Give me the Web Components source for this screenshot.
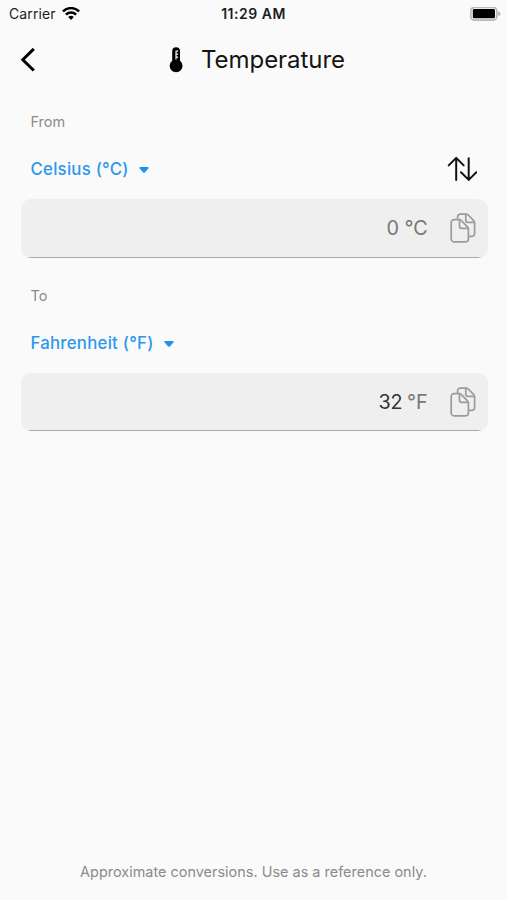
<!DOCTYPE html>
<html lang="en">
<head>
<meta charset="utf-8">
<title>Temperature</title>
<style>
  body {
    margin: 0;
    background: #fafafa;
  }
</style>
</head>
<body>
<unit-converter></unit-converter>

<script>
const define = (name, html) => {
  const template = document.createElement('template');
  template.innerHTML = html;
  window.customElements.define(name, class extends HTMLElement {
    constructor() {
      super();
      this.attachShadow({mode: 'open'})
          .appendChild(template.content.cloneNode(true));
    }
  });
};

define('status-bar', `
  <style>
    :host {
      display: grid;
      grid-template-columns: 1fr auto 1fr;
      align-items: center;
      height: 28px;
      padding: 0 6px 0 9px;
      box-sizing: border-box;
      font-size: 14px;
      color: #1c1c1c;
    }
    .carrier {
      display: flex;
      align-items: center;
      gap: 6px;
      letter-spacing: 0.1px;
    }
    .time {
      padding-right: 3px;
      font-weight: 600;
      letter-spacing: 0.5px;
    }
    .battery {
      justify-self: end;
    }
    svg {
      display: block;
    }
  </style>
  <div class="carrier">
    <span>Carrier</span>
    <svg width="18" height="14" viewBox="0 0 18 14" fill="none" stroke="#000" stroke-width="2.5">
      <path d="M.9 4.4a11.6 11.6 0 0 1 16.2 0"/>
      <path d="M3.9 7.7a7.3 7.3 0 0 1 10.2 0"/>
      <path d="M9 13 6.2 10.1a4.1 4.1 0 0 1 5.6 0z" fill="#000" stroke="none"/>
    </svg>
  </div>
  <div class="time">11:29 AM</div>
  <svg class="battery" width="31" height="15" viewBox="0 0 31 15">
    <rect x=".8" y=".3" width="26" height="12.8" rx="3.6" fill="#fafafa" stroke="#b8b8b8" stroke-width="1.7"/>
    <rect x="2.8" y="2.1" width="22.2" height="9.2" rx="1.4"/>
    <path d="M28.2 4.2c2.8.9 2.8 4.1 0 5z" fill="#b0b0b0"/>
  </svg>
`);

define('nav-header', `
  <style>
    :host {
      display: grid;
      grid-template-columns: 1fr auto 1fr;
      align-items: center;
      height: 64px;
      padding: 0 20px;
      box-sizing: border-box;
      color: #151515;
    }
    .title {
      display: flex;
      align-items: center;
      gap: 18px;
      padding-left: 7px;
      font-size: 24px;
      letter-spacing: -0.05px;
    }
    svg {
      display: block;
    }
  </style>
  <svg width="16" height="24" viewBox="0 0 16 24" fill="none" stroke="#000" stroke-width="3">
    <path d="M13.8.9 2.8 11.7l11 10.8"/>
  </svg>
  <div class="title">
    <svg width="14" height="26" viewBox="0 0 14 26">
      <path d="M3.2 4.1a3.9 3.9 0 0 1 7.8 0v9.7a6.4 6.4 0 1 1-7.8 0z"/>
      <path d="M7 3.8v8.6M7 4.2h2.2M7 7.2h2.2M7 10.2h2.2" stroke="#fafafa" stroke-width="1.2" fill="none"/>
    </svg>
    <slot></slot>
  </div>
`);

define('swap-icon', `
  <style>
    :host, svg {
      display: block;
    }
  </style>
  <svg width="30" height="26" viewBox="0 0 30 26" fill="none" stroke="#111" stroke-width="2" stroke-linecap="round" stroke-linejoin="round">
    <path d="M9.2 24V2.2M1.7 9.4l7.5-7.5 7.5 7.5"/>
    <path d="M21.7 2.2V24M14 16.3l7.7 7.6 7.7-7.6"/>
  </svg>
`);

define('copy-icon', `
  <style>
    :host, svg {
      display: block;
    }
  </style>
  <svg width="26" height="30" viewBox="0 0 26 30" fill="none" stroke="#9b9b9b" stroke-width="1.7" stroke-linejoin="round">
    <path d="M7.6 6.7V3.8a2.7 2.7 0 0 1 2.7-2.7h5.9c.9 0 1.5.3 2.1.9l5.4 5.7c.6.6.9 1.2.9 2.1v10.8a2.7 2.7 0 0 1-2.7 2.7h-3.1"/>
    <path d="M15.8 1.2v6.1c0 1.3.7 2 2 2h6.6"/>
    <path d="M3.9 6.7h5.5c.8 0 1.4.3 2 .9l6.1 6.3c.6.6.9 1.2.9 2v10.2a2.7 2.7 0 0 1-2.7 2.7H3.9a2.7 2.7 0 0 1-2.7-2.7V9.4a2.7 2.7 0 0 1 2.7-2.7z"/>
    <path d="M9.5 6.8v6.5c0 1.3.7 2 2 2h6.7"/>
  </svg>
`);

define('unit-section', `
  <style>
    :host {
      display: grid;
      grid-template-rows: 60px 34px 13px 58.5px;
      height: 173.5px;
      padding: 0 19.5px 0 20.5px;
      box-sizing: border-box;
    }
    .label {
      align-self: center;
      padding: 0 0 0.6px 10px;
      font-size: 14.4px;
      letter-spacing: 0.05px;
      color: #8b8b8b;
    }
    .select {
      display: flex;
      justify-content: space-between;
      align-items: center;
      padding: 0 10.5px 0 10px;
    }
    .unit {
      display: flex;
      align-items: center;
      gap: 10px;
      padding-top: 1px;
      font-size: 16.8px;
      font-weight: 500;
      letter-spacing: 0.24px;
      color: #2d98ea;
    }
    .unit svg {
      margin-top: 1px;
    }
    .field {
      grid-row: 4;
      display: flex;
      justify-content: flex-end;
      align-items: center;
      gap: 22px;
      padding-right: 12px;
      border-radius: 10px;
      background: linear-gradient(#a9a9a9, #a9a9a9) bottom / 100% 1px no-repeat #efefef;
      font-size: 19.8px;
      letter-spacing: -0.1px;
      color: #777;
    }
    .value {
      padding-top: 2px;
    }
  </style>
  <div class="label"><slot name="label"></slot></div>
  <div class="select">
    <div class="unit">
      <slot name="unit"></slot>
      <svg width="10" height="6" viewBox="0 0 10 6" fill="#1e92ef">
        <path d="M1.3 0h7.4c.9 0 1.3.9.7 1.5L6 5.3a1.4 1.4 0 0 1-2 0L.6 1.5C0 .9.4 0 1.3 0z"/>
      </svg>
    </div>
    <slot name="action"></slot>
  </div>
  <div class="field">
    <div class="value"><slot name="value"></slot></div>
    <copy-icon></copy-icon>
  </div>
`);

define('unit-converter', `
  <style>
    :host {
      display: flex;
      flex-direction: column;
      height: 100vh;
      background: #fafafa;
      font-family: Inter, "Liberation Sans", sans-serif;
      line-height: 1.2;
    }
    .output {
      word-spacing: -1px;
    }
    .result {
      color: #333;
    }
    footer {
      margin-top: auto;
      padding-bottom: 20px;
      text-align: center;
      font-size: 14.4px;
      letter-spacing: 0.03px;
      color: #8b8b8b;
    }
  </style>
  <status-bar></status-bar>
  <nav-header>Temperature</nav-header>
  <unit-section>
    <span slot="label">From</span>
    <span slot="unit">Celsius (°C)</span>
    <swap-icon slot="action"></swap-icon>
    <span slot="value">0 °C</span>
  </unit-section>
  <unit-section>
    <span slot="label">To</span>
    <span slot="unit">Fahrenheit (°F)</span>
    <span slot="value" class="output"><span class="result">32</span> °F</span>
  </unit-section>
  <footer>Approximate conversions. Use as a reference only.</footer>
`);
</script>
</body>
</html>
